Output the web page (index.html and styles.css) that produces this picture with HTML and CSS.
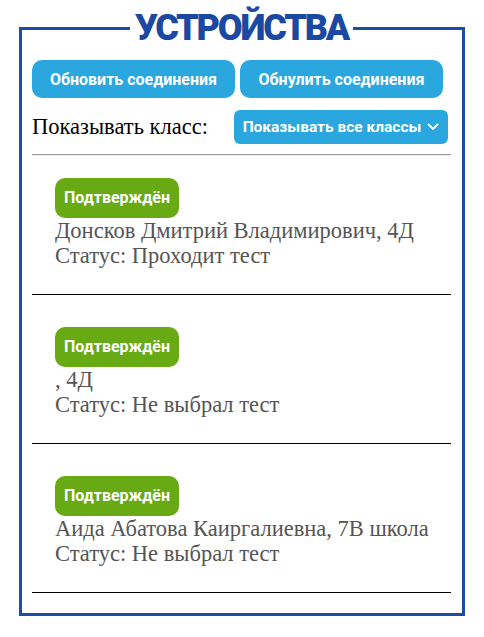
FILE: index.html
```html
<!DOCTYPE html>
<html lang="ru">
<head>
<meta charset="utf-8">
<link rel="stylesheet" href="styles.css">
</head>
<body>
<fieldset class="devices">
  <legend class="title">УСТРОЙСТВА</legend>
  <div class="actions">
    <button class="btn">Обновить соединения</button>
    <button class="btn">Обнулить соединения</button>
  </div>
  <div class="filter">
    <span class="filter-label">Показывать класс:</span>
    <button class="select">Показывать все классы
      <svg class="chev" width="12" height="8" viewBox="0 0 12 8"><path d="M1.5 1.5 L6 6 L10.5 1.5" fill="none" stroke="#fff" stroke-width="1.8" stroke-linecap="round" stroke-linejoin="round"/></svg>
    </button>
  </div>
  <hr class="divider">
  <div class="item">
    <span class="badge">Подтверждён</span>
    <div class="line">Донсков Дмитрий Владимирович, 4Д</div>
    <div class="line">Статус: Проходит тест</div>
  </div>
  <div class="item">
    <span class="badge">Подтверждён</span>
    <div class="line">, 4Д</div>
    <div class="line">Статус: Не выбрал тест</div>
  </div>
  <div class="item">
    <span class="badge">Подтверждён</span>
    <div class="line">Аида Абатова Каиргалиевна, 7В школа</div>
    <div class="line">Статус: Не выбрал тест</div>
  </div>
</fieldset>
</body>
</html>
```
FILE: styles.css
```css
html, body {
  margin: 0;
  padding: 0;
  background: #fff;
}
body {
  padding: 8px 19px 0 19px;
}
.devices {
  margin: 0;
  width: 446px;
  box-sizing: border-box;
  border: 3px solid #1b4ea3;
  padding: 0 11px 10px 10px;
  font-family: "Liberation Serif", serif;
}
.title {
  margin: 0 auto;
  padding: 0 5px;
  font-family: Roboto, "DejaVu Sans", sans-serif;
  font-weight: 900;
  font-size: 36px;
  line-height: 40px;
  color: #1b48a0;
  letter-spacing: -2.2px;
}
.actions {
  display: flex;
  gap: 5px;
  margin-top: 12px;
}
.btn {
  width: 203px;
  height: 38px;
  border: none;
  border-radius: 10px;
  background: #2aa7df;
  color: #fff;
  font-family: Roboto, "DejaVu Sans", sans-serif;
  font-weight: 700;
  font-size: 16px;
  padding: 0;
}
.filter {
  display: flex;
  align-items: center;
  justify-content: space-between;
  margin-top: 12px;
  padding-right: 3px;
}
.filter-label {
  font-size: 22.5px;
  color: #000;
}
.select {
  width: 214px;
  height: 34px;
  border: none;
  border-radius: 6px;
  background: #2aa7df;
  color: #fff;
  font-family: Roboto, "DejaVu Sans", sans-serif;
  font-weight: 700;
  font-size: 15.5px;
  display: flex;
  align-items: center;
  justify-content: center;
  gap: 6px;
  padding: 0;
}
.chev {
  display: block;
}
.divider {
  margin: 10px 0 0;
  border: 0;
  border-top: 1px solid #9a9a9a;
  border-bottom: 1px solid #eee;
  height: 0;
}
.item {
  padding: 22px 10px 26px 23px;
  border-bottom: 1px solid #000;
  margin-bottom: 10px;
  color: #555;
}
.badge {
  display: inline-block;
  height: 40px;
  line-height: 40px;
  padding: 0 9px;
  border-radius: 10px;
  background: #67aa14;
  color: #fff;
  font-family: Roboto, "DejaVu Sans", sans-serif;
  font-weight: 700;
  font-size: 16px;
}
.line {
  font-size: 22.5px;
  line-height: 25px;
  white-space: nowrap;
}
```
